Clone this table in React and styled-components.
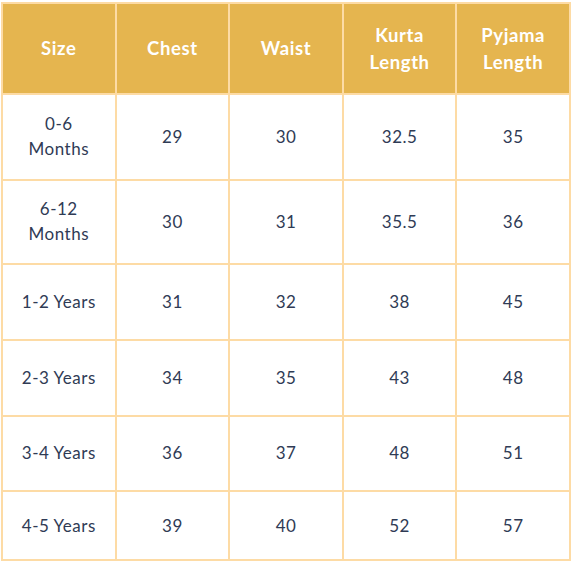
import React from "react";
import styled, { createGlobalStyle } from "styled-components";

const Global = createGlobalStyle`
  html, body { margin: 0; padding: 0; background: #ffffff; }
  body { font-family: Lato, "Open Sans", sans-serif; }
`;

const Page = styled.div`
  padding: 2px 2px 0 1px;
`;

const Grid = styled.div`
  width: 570px;
  box-sizing: border-box;
  display: grid;
  grid-template-columns: repeat(5, 1fr);
  grid-template-rows: 89px 84px 82px 74px 74px 73px 67px;
  gap: 2px;
  padding: 2px;
  background: #fddba5;
`;

const HeadCell = styled.div`
  background: #e5b54f;
  color: #ffffff;
  font-weight: 700;
  font-size: 18.5px;
  letter-spacing: 0.6px;
  line-height: 27px;
  display: flex;
  align-items: center;
  justify-content: center;
  text-align: center;
`;

const Cell = styled.div`
  background: #ffffff;
  color: #2f3b55;
  font-size: 17px;
  letter-spacing: 0.5px;
  line-height: 25px;
  display: flex;
  align-items: center;
  justify-content: center;
  text-align: center;
  padding-bottom: ${(p) => (p.$last ? "0" : "2px")};
`;

const headers = [["Size"], ["Chest"], ["Waist"], ["Kurta", "Length"], ["Pyjama", "Length"]];

const rows = [
  [["0-6", "Months"], "29", "30", "32.5", "35"],
  [["6-12", "Months"], "30", "31", "35.5", "36"],
  [["1-2 Years"], "31", "32", "38", "45"],
  [["2-3 Years"], "34", "35", "43", "48"],
  [["3-4 Years"], "36", "37", "48", "51"],
  [["4-5 Years"], "39", "40", "52", "57"],
];

const Lines = ({ parts }) =>
  parts.map((t, i) => (
    <React.Fragment key={i}>
      {i > 0 && <br />}
      {t}
    </React.Fragment>
  ));

export default function App() {
  return (
    <Page>
      <Global />
      <Grid>
        {headers.map((h, i) => (
          <HeadCell key={i}>
            <span>
              <Lines parts={h} />
            </span>
          </HeadCell>
        ))}
        {rows.map((r, ri) =>
          r.map((c, ci) => (
            <Cell key={ri + "-" + ci} $last={ri === rows.length - 1}>
              <span>{Array.isArray(c) ? <Lines parts={c} /> : c}</span>
            </Cell>
          ))
        )}
      </Grid>
    </Page>
  );
}
